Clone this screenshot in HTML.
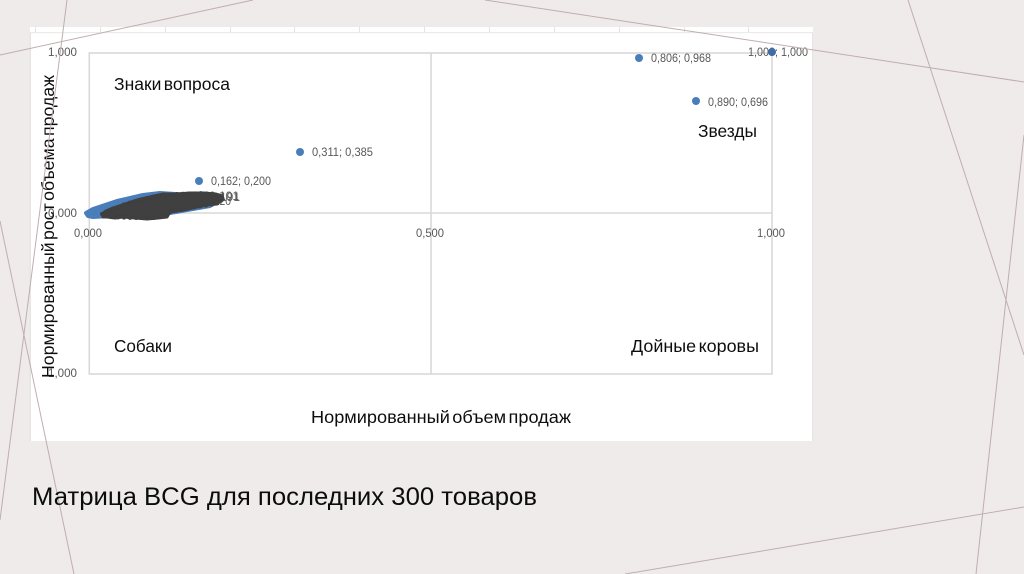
<!DOCTYPE html>
<html lang="ru">
<head>
<meta charset="utf-8">
<title>Матрица BCG</title>
<style>
html,body{margin:0;padding:0;width:1024px;height:574px;overflow:hidden;background:#efebeb}
svg{display:block;position:absolute;left:0;top:0}
text{font-family:"Liberation Sans",sans-serif}
.s{font-size:12px;fill:#595959}
.b{font-size:17.5px;fill:#111;word-spacing:-2.5px}
</style>
</head>
<body>
<svg width="1024" height="574" viewBox="0 0 1024 574" xmlns="http://www.w3.org/2000/svg">
  <defs><filter id="f" x="-5%" y="-5%" width="110%" height="110%"><feGaussianBlur stdDeviation="0.35"/></filter></defs>
  <rect width="1024" height="574" fill="#efebeb"/>
  <g filter="url(#f)">
    <rect x="30" y="27" width="783" height="414" fill="#fff"/>
    <rect x="30" y="32" width="783" height="1.2" fill="#ecebeb"/>
    <rect x="29.5" y="33" width="1.5" height="408" fill="#e6e4e4"/>
    <rect x="812" y="33" width="1.2" height="408" fill="#e6e4e4"/>
    <g fill="#e4e2e2">
      <rect x="35" y="27" width="1" height="5"/><rect x="100" y="27" width="1" height="5"/>
      <rect x="165" y="27" width="1" height="5"/><rect x="230" y="27" width="1" height="5"/>
      <rect x="294" y="27" width="1" height="5"/><rect x="359" y="27" width="1" height="5"/>
      <rect x="424" y="27" width="1" height="5"/><rect x="489" y="27" width="1" height="5"/>
      <rect x="554" y="27" width="1" height="5"/><rect x="619" y="27" width="1" height="5"/>
      <rect x="684" y="27" width="1" height="5"/><rect x="748" y="27" width="1" height="5"/>
    </g>
    <g fill="none" stroke="#d9d9d9" stroke-width="1.6">
      <rect x="89.3" y="53" width="682.7" height="321"/>
      <path d="M431 53V374M89 213H772"/>
    </g>
    <g>
      <text class="s" x="48" y="56" textLength="29" lengthAdjust="spacingAndGlyphs">1,000</text>
      <text class="s" x="48" y="217" textLength="29" lengthAdjust="spacingAndGlyphs">0,000</text>
      <text class="s" x="48" y="377" textLength="29" lengthAdjust="spacingAndGlyphs">1,000</text>
      <text class="s" x="74" y="237" textLength="28" lengthAdjust="spacingAndGlyphs">0,000</text>
      <text class="s" x="416" y="237" textLength="28" lengthAdjust="spacingAndGlyphs">0,500</text>
      <text class="s" x="757" y="237" textLength="28" lengthAdjust="spacingAndGlyphs">1,000</text>
      <text class="s" x="312" y="156" textLength="61" lengthAdjust="spacingAndGlyphs">0,311; 0,385</text>
      <text class="s" x="211" y="185" textLength="60" lengthAdjust="spacingAndGlyphs">0,162; 0,200</text>
      <text class="s" x="651" y="62" textLength="60" lengthAdjust="spacingAndGlyphs">0,806; 0,968</text>
      <text class="s" x="708" y="106" textLength="60" lengthAdjust="spacingAndGlyphs">0,890; 0,696</text>
      <text class="s" x="748" y="56" textLength="60" lengthAdjust="spacingAndGlyphs">1,000; 1,000</text>
      <text class="s" x="210" y="201" textLength="30" lengthAdjust="spacingAndGlyphs">0,191</text>
      <text class="s" x="209" y="200" textLength="30" lengthAdjust="spacingAndGlyphs">0,101</text>
      <text class="s" x="205" y="205" textLength="26" lengthAdjust="spacingAndGlyphs">0,120</text>
    </g>
    <g fill="#4a7ebb">
      <circle cx="300" cy="152" r="4"/>
      <circle cx="199" cy="181" r="4"/>
      <circle cx="639" cy="58" r="4"/>
      <circle cx="696" cy="101" r="4"/>
      <circle cx="772" cy="52" r="4" fill="#3f6da6"/>
      <path d="M86 213 L93 209 L117 201 L143 195 L160 193 L190 195 L211 204 L210 206 L170 213 L110 216 L93 217 L88 216 Z" stroke="#4a7ebb" stroke-width="4" stroke-linejoin="round"/>
    </g>
    <path d="M102 214 L106 211 L113 208 L125 204 L137 200 L150 197 L163 194 L176 194 L190 193 L204 193 L216 194 L222 196 L223 199 L217 204 L207 205 L197 207 L184 210 L170 212 L167 217 L158 218 L147 219 L135 218 L123 217 L115 218 L107 217 L103 217 Z" fill="#3f3f3f" stroke="#3f3f3f" stroke-width="3" stroke-linejoin="round"/>
    <path d="M102 214 L125 204 L150 197 L176 194 L204 193 L222 196 L217 204 L197 207 L170 212 L158 218 L135 218 L107 217 Z" fill="none" stroke="#3f3f3f" stroke-width="4" stroke-linecap="round" stroke-dasharray="0 6"/>
    <text class="b" x="114" y="90" textLength="116" lengthAdjust="spacingAndGlyphs">Знаки вопроса</text>
    <text class="b" x="698" y="137" textLength="59" lengthAdjust="spacingAndGlyphs">Звезды</text>
    <text class="b" x="114" y="352" textLength="58" lengthAdjust="spacingAndGlyphs">Собаки</text>
    <text class="b" x="631" y="352" textLength="128" lengthAdjust="spacingAndGlyphs">Дойные коровы</text>
    <text class="b" x="311" y="423" textLength="260" lengthAdjust="spacingAndGlyphs">Нормированный объем продаж</text>
    <text class="b" transform="translate(54,378) rotate(-90)" x="0" y="0" textLength="303" lengthAdjust="spacingAndGlyphs">Нормированный рост объема продаж</text>
  </g>
  <g stroke="#bfaeae" stroke-width="1" fill="none">
    <path d="M0 55L253 0"/>
    <path d="M67 0L0 520"/>
    <path d="M0 221L74 574"/>
    <path d="M485 0L1024 82"/>
    <path d="M908 0L1024 355"/>
    <path d="M1024 135L976 574"/>
    <path d="M625 574L1024 507"/>
  </g>
  <text x="32" y="505" font-size="25" fill="#0c0c0c" textLength="505" lengthAdjust="spacingAndGlyphs">Матрица BCG для последних 300 товаров</text>
</svg>
</body>
</html>
